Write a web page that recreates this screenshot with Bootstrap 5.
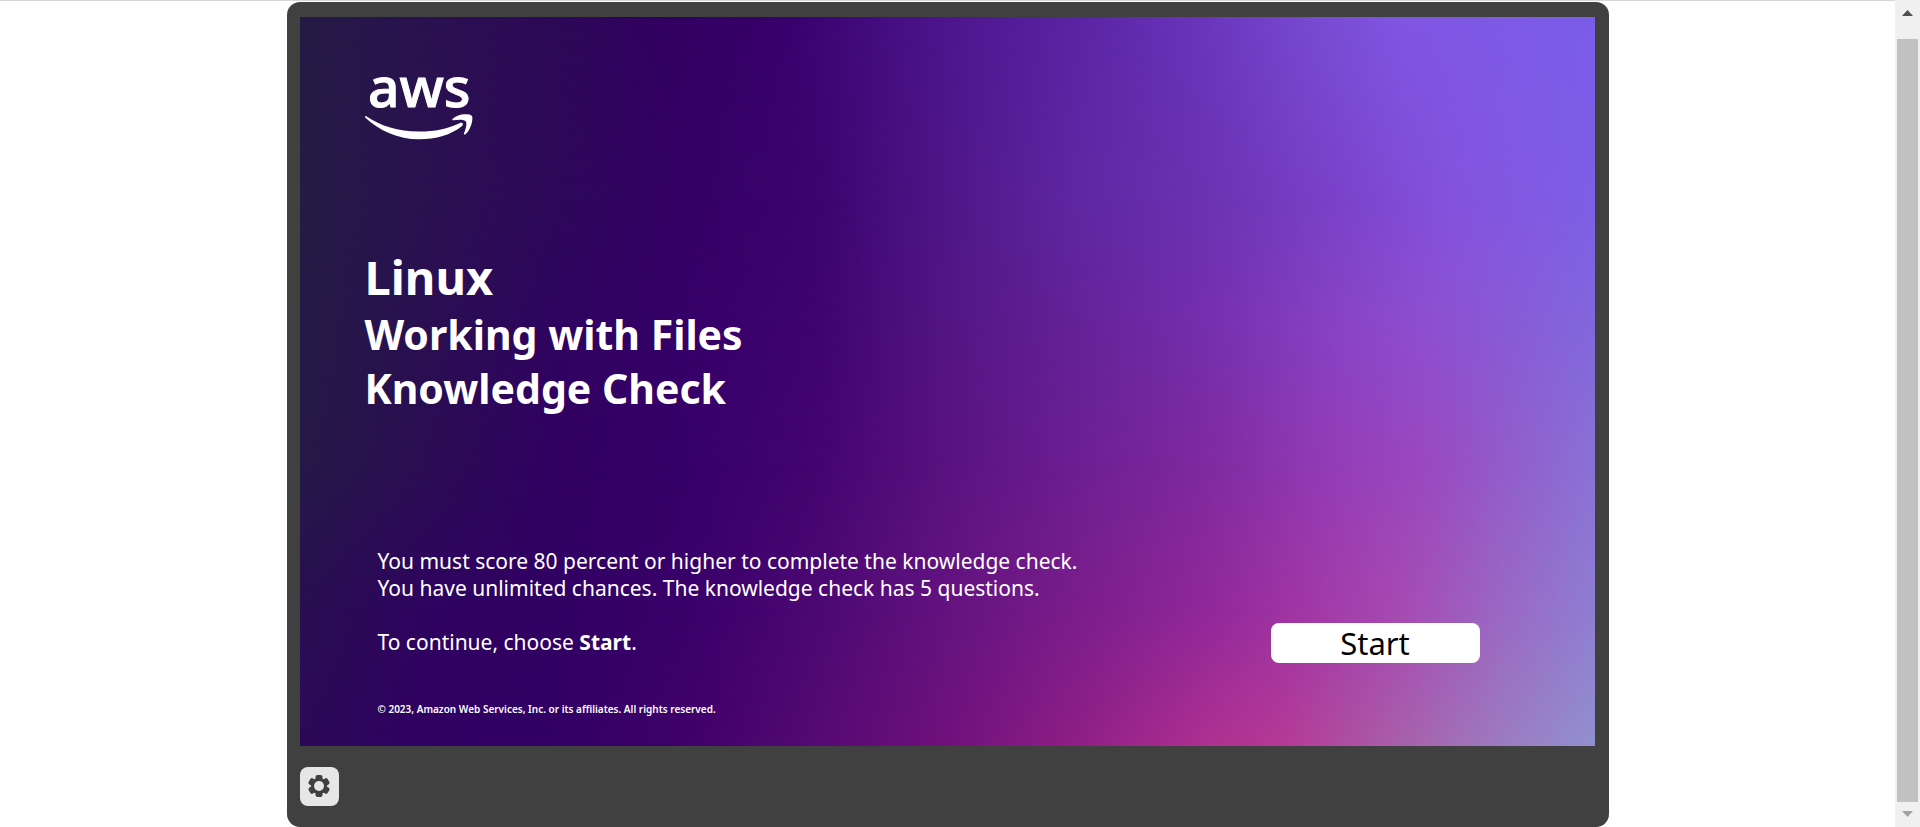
<!DOCTYPE html>
<html lang="en">
<head>
<meta charset="utf-8">
<meta name="viewport" content="width=device-width, initial-scale=1">
<title>Linux: Working with Files Knowledge Check</title>
<link href="https://cdn.jsdelivr.net/npm/bootstrap@5.3.0/dist/css/bootstrap.min.css" rel="stylesheet">
<style>
  body { font-family: "Noto Sans", "Open Sans", sans-serif; background: #fff; }
  .page-area { border-top: 1px solid #d5d5dc; padding-top: 1px; min-width: 0; }
  .player { max-width: 1322px; background: #404040; border-radius: 13px; padding: 15px 14px 0 13px; }
  .slide { min-height: 729px; padding: 0 65px; color: #fff; isolation: isolate; }

  /* Colour rows of the backdrop; each fades in below the previous one */
  .tint { position: absolute; inset: 0; z-index: -1; }
  .tint-1 { background: linear-gradient(90deg, #251b45, #2a1150 10%, #2d0957 20%, #320062 29%, #38006b 37%, #4c168e 50%, #5a24a4 60%, #6a36bd 70%, #774ad0 78%, #8056e3 85%, #7b5de9); }
  .tint-2 { background: linear-gradient(90deg, #241c45, #2a1150 10%, #2e085a 20%, #340066 30%, #3c046e 40%, #4f1688 50%, #5f27a2 60%, #6b32b2 70%, #7a42c9 80%, #8453de 89%, #7e5fe6);
    -webkit-mask-image: linear-gradient(transparent, #000 25%); mask-image: linear-gradient(transparent, #000 25%); }
  .tint-3 { background: linear-gradient(90deg, #241b45, #2a0f52 10%, #2f0460 20%, #360068 30%, #3f046f 40%, #531683 50%, #642298 60%, #752fae 70%, #8843c4 80%, #8e4fd0 87%, #8267dc);
    -webkit-mask-image: linear-gradient(transparent 25%, #000 42%); mask-image: linear-gradient(transparent 25%, #000 42%); }
  .tint-4 { background: linear-gradient(90deg, #251947, #2b0d53 10%, #310062 20%, #360069 30%, #440570 40%, #5a1280 50%, #6c1f92 60%, #7f2a9f 70%, #943db8 80%, #9a49c0 87%, #8972d6);
    -webkit-mask-image: linear-gradient(transparent 42%, #000 61%); mask-image: linear-gradient(transparent 42%, #000 61%); }
  .tint-5 { background: linear-gradient(90deg, #280f50, #2f0360 10%, #310063 20%, #3a006a 30%, #4c0873 40%, #631380 50%, #7a1d8b 60%, #90289a 70%, #a035a4 77%, #a64ab2 85%, #9a68c4 93%, #8f7dd2);
    -webkit-mask-image: linear-gradient(transparent 61%, #000 81%); mask-image: linear-gradient(transparent 61%, #000 81%); }
  .tint-6 { background: linear-gradient(90deg, #2c0958, #300062 10%, #330066 20%, #40006a 30%, #560a73 40%, #70117b 50%, #8f1f86 60%, #ae3090 70%, #b53a96 76%, #a860aa 85%, #9c7cc0 93%, #9190cf);
    -webkit-mask-image: linear-gradient(transparent 81%, #000); mask-image: linear-gradient(transparent 81%, #000); }

  .brand-logo { margin-top: 24px; }
  .deck-title { font-size: 47px; line-height: 60px; font-weight: 700; margin: 106px 0 0; }
  .deck-subtitle { font-size: 41px; line-height: 54px; font-weight: 700; }
  .intro { font-size: 21px; line-height: 27px; padding: 0 0 7px 13px; margin-top: 133px; }
  .intro p { margin-bottom: 27px; }
  .intro p:last-child { margin-bottom: 0; }
  .btn-start { width: 209px; height: 40px; padding: 0; margin-right: 50px; border-radius: 8px; border: 0; background: #fff; color: #000; font-size: 31px; line-height: 40px; }
  .btn-start:hover { background: #eee; color: #000; }
  .legal { font-size: 10px; font-weight: 600; line-height: 16px; padding-left: 13px; margin: 38px 0 0; }
  .tool-row { padding: 21px 0; }
  .btn-gear { width: 39px; height: 39px; padding: 0; border: 0; border-radius: 8px; background: #e6e6e6; }
  .btn-gear:hover { background: #fff; }

  .scroll-rail { width: 25px; flex: none; background: #f0f0f0; padding: 0 2px; }
  .scroll-cap { height: 39px; padding-top: 10px; }
  .scroll-cap-end { height: 25px; padding-top: 9px; }
  .scroll-thumb { background: #c1c1c1; }
</style>
</head>
<body>
<div class="d-flex min-vh-100">
  <main class="page-area flex-grow-1">
    <div class="player mx-auto">
      <section class="slide position-relative d-flex flex-column">
        <div class="tint tint-1"></div>
        <div class="tint tint-2"></div>
        <div class="tint tint-3"></div>
        <div class="tint tint-4"></div>
        <div class="tint tint-5"></div>
        <div class="tint tint-6"></div>

        <svg class="brand-logo" width="108" height="100" viewBox="0 -20 108 100" fill="#fff" role="img" aria-label="AWS">
          <text x="3" y="46" font-family="Noto Sans, sans-serif" font-size="55" font-weight="500" stroke="#fff" stroke-width="1">aws</text>
          <path d="M1.300 55.200C16 65 33 70.500 54 70.500C70 70.500 83 68 95 62C97.500 61 99 63 97 65C86 74 71 78.300 54 78.300C33 78.300 14 69.500.700 57C-.300 56-.200 54.500 1.300 55.200Z"/>
          <path d="M87.500 58C90.500 55 95.500 53.300 100 53.300C103 53.300 106.300 53.700 107 55C108.400 58 106 68.500 100.500 73.300C99.500 74 98.500 73.500 99 72.300C100.500 68.500 102.200 63 101 60.700C99.500 58.300 93.500 58.600 88.500 59.300C87.200 59.400 87 58.500 87.500 58Z"/>
        </svg>

        <h1 class="deck-title">Linux</h1>
        <div class="deck-subtitle">Working with Files<br>Knowledge Check</div>

        <div class="d-flex justify-content-between align-items-end">
          <div class="intro">
            <p>You must score 80 percent or higher to complete the knowledge check.<br>You have unlimited chances. The knowledge check has 5 questions.</p>
            <p>To continue, choose <strong>Start</strong>.</p>
          </div>
          <button type="button" class="btn btn-start">Start</button>
        </div>
        <p class="legal">© 2023, Amazon Web Services, Inc. or its affiliates. All rights reserved.</p>
      </section>

      <div class="tool-row d-flex">
        <button type="button" class="btn btn-gear d-flex align-items-center justify-content-center" aria-label="Settings">
          <svg width="24" height="24" viewBox="-12 -11 24 24">
            <g fill="#404040">
              <circle r="8"/>
              <rect id="tooth" x="-3.500" y="-11" width="7" height="22" rx="2"/>
              <use href="#tooth" transform="rotate(60)"/>
              <use href="#tooth" transform="rotate(120)"/>
            </g>
            <circle r="5" fill="#e6e6e6"/>
          </svg>
        </button>
      </div>
    </div>
  </main>
  <div class="scroll-rail d-flex flex-column" aria-hidden="true">
    <div class="scroll-cap text-center lh-1">
      <svg class="d-block mx-auto" width="11" height="6" viewBox="0 0 11 6"><path d="M0 6L5.500 0L11 6Z" fill="#505050"/></svg>
    </div>
    <div class="scroll-thumb flex-grow-1"></div>
    <div class="scroll-cap-end">
      <svg class="d-block mx-auto" width="11" height="6" viewBox="0 0 11 6"><path d="M0 0L5.500 6L11 0Z" fill="#a3a3a3"/></svg>
    </div>
  </div>
</div>
<script src="https://cdn.jsdelivr.net/npm/bootstrap@5.3.0/dist/js/bootstrap.bundle.min.js"></script>
</body>
</html>
